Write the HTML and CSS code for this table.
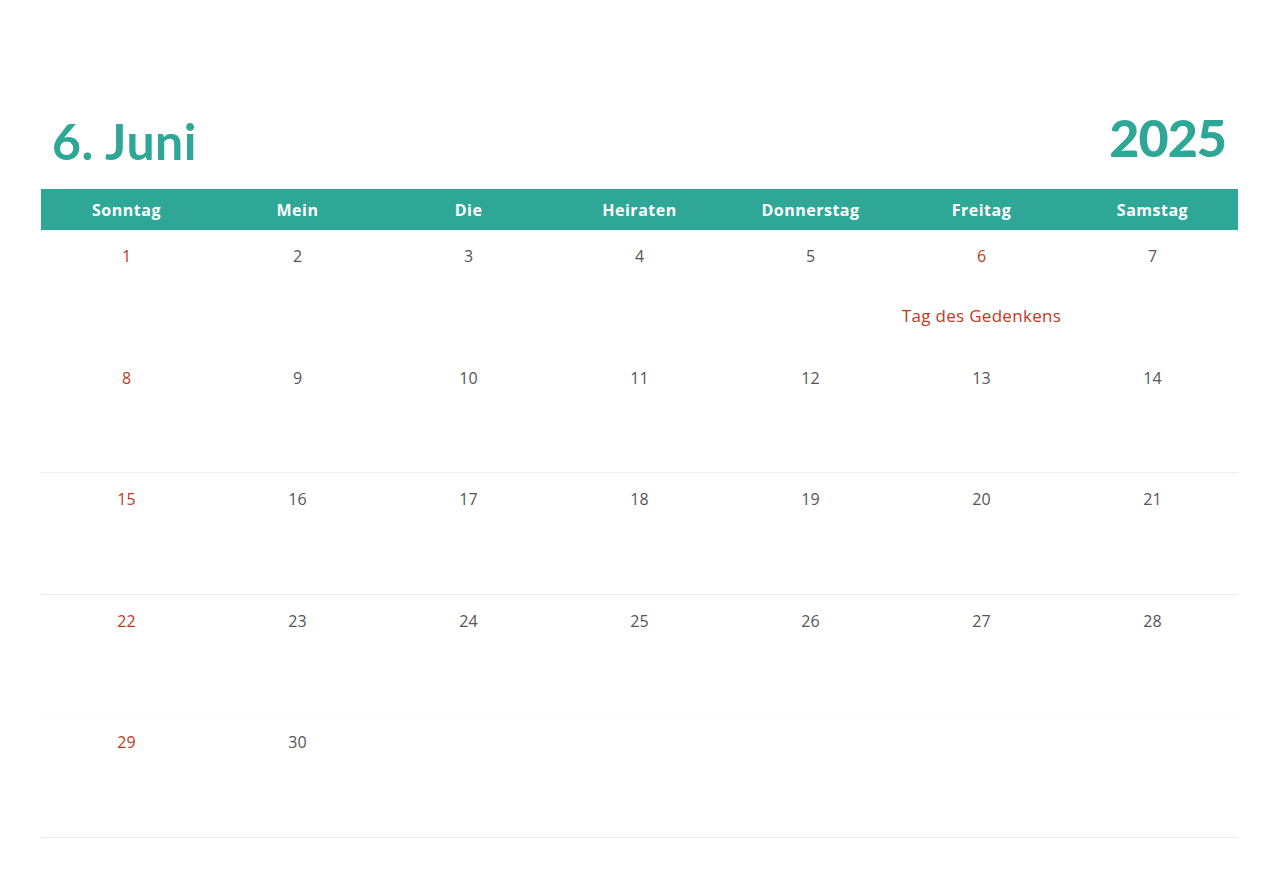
FILE: index.html
```html
<!DOCTYPE html>
<html lang="de">
<head>
<meta charset="utf-8">
<title>Juni 2025</title>
<link rel="stylesheet" href="styles.css">
</head>
<body>
<div class="page">
  <div class="title-row">
    <div class="month">6. Juni</div>
    <div class="year">2025</div>
  </div>
  <div class="weekdays">
    <div>Sonntag</div><div>Mein</div><div>Die</div><div>Heiraten</div><div>Donnerstag</div><div>Freitag</div><div>Samstag</div>
  </div>
  <div class="week">
    <div class="day"><span class="num red">1</span></div>
    <div class="day"><span class="num">2</span></div>
    <div class="day"><span class="num">3</span></div>
    <div class="day"><span class="num">4</span></div>
    <div class="day"><span class="num">5</span></div>
    <div class="day"><span class="num red">6</span><span class="event">Tag des Gedenkens</span></div>
    <div class="day"><span class="num">7</span></div>
  </div>
  <div class="week lined">
    <div class="day"><span class="num red">8</span></div>
    <div class="day"><span class="num">9</span></div>
    <div class="day"><span class="num">10</span></div>
    <div class="day"><span class="num">11</span></div>
    <div class="day"><span class="num">12</span></div>
    <div class="day"><span class="num">13</span></div>
    <div class="day"><span class="num">14</span></div>
  </div>
  <div class="week lined">
    <div class="day"><span class="num red">15</span></div>
    <div class="day"><span class="num">16</span></div>
    <div class="day"><span class="num">17</span></div>
    <div class="day"><span class="num">18</span></div>
    <div class="day"><span class="num">19</span></div>
    <div class="day"><span class="num">20</span></div>
    <div class="day"><span class="num">21</span></div>
  </div>
  <div class="week faint">
    <div class="day"><span class="num red">22</span></div>
    <div class="day"><span class="num">23</span></div>
    <div class="day"><span class="num">24</span></div>
    <div class="day"><span class="num">25</span></div>
    <div class="day"><span class="num">26</span></div>
    <div class="day"><span class="num">27</span></div>
    <div class="day"><span class="num">28</span></div>
  </div>
  <div class="week lined">
    <div class="day"><span class="num red">29</span></div>
    <div class="day"><span class="num">30</span></div>
    <div class="day"></div>
    <div class="day"></div>
    <div class="day"></div>
    <div class="day"></div>
    <div class="day"></div>
  </div>
</div>
</body>
</html>
```
FILE: styles.css
```css
html, body {
  margin: 0;
  padding: 0;
  background: #ffffff;
}
body {
  font-family: "Open Sans", "Noto Sans", sans-serif;
  color: #555555;
}
.page {
  width: 1197px;
  margin-left: 41px;
}
.title-row {
  height: 189px;
  display: flex;
  justify-content: space-between;
  align-items: flex-end;
  box-sizing: border-box;
  padding: 0 12px 18px 11px;
  color: #2fa797;
  font-family: "Lato", "Noto Sans", sans-serif;
  font-weight: 700;
}
.month {
  font-size: 50px;
  line-height: 60px;
  letter-spacing: 0.5px;
}
.year {
  font-size: 52px;
  line-height: 60px;
  font-weight: 900;
  letter-spacing: -1px;
  transform: translateY(-4px);
}
.weekdays {
  display: grid;
  grid-template-columns: repeat(7, 1fr);
  height: 41px;
  background: #2fa797;
  color: #ffffff;
  font-weight: 700;
  font-size: 16px;
  letter-spacing: 0.5px;
  align-items: center;
  text-align: center;
}
.week {
  display: grid;
  grid-template-columns: repeat(7, 1fr);
  height: 121.5px;
  box-sizing: border-box;
  border-bottom: 1px solid transparent;
}
.week.lined {
  border-bottom-color: #efefef;
}
.week.faint {
  border-bottom-color: #fafafa;
}
.day {
  display: flex;
  flex-direction: column;
  align-items: center;
  padding-top: 15px;
  font-size: 16px;
}
.num {
  line-height: 22px;
  color: #555555;
}
.num.red {
  color: #c0391b;
}
.event {
  margin-top: 38px;
  line-height: 22px;
  color: #c0391b;
  font-size: 17px;
  letter-spacing: 0.3px;
}
```
